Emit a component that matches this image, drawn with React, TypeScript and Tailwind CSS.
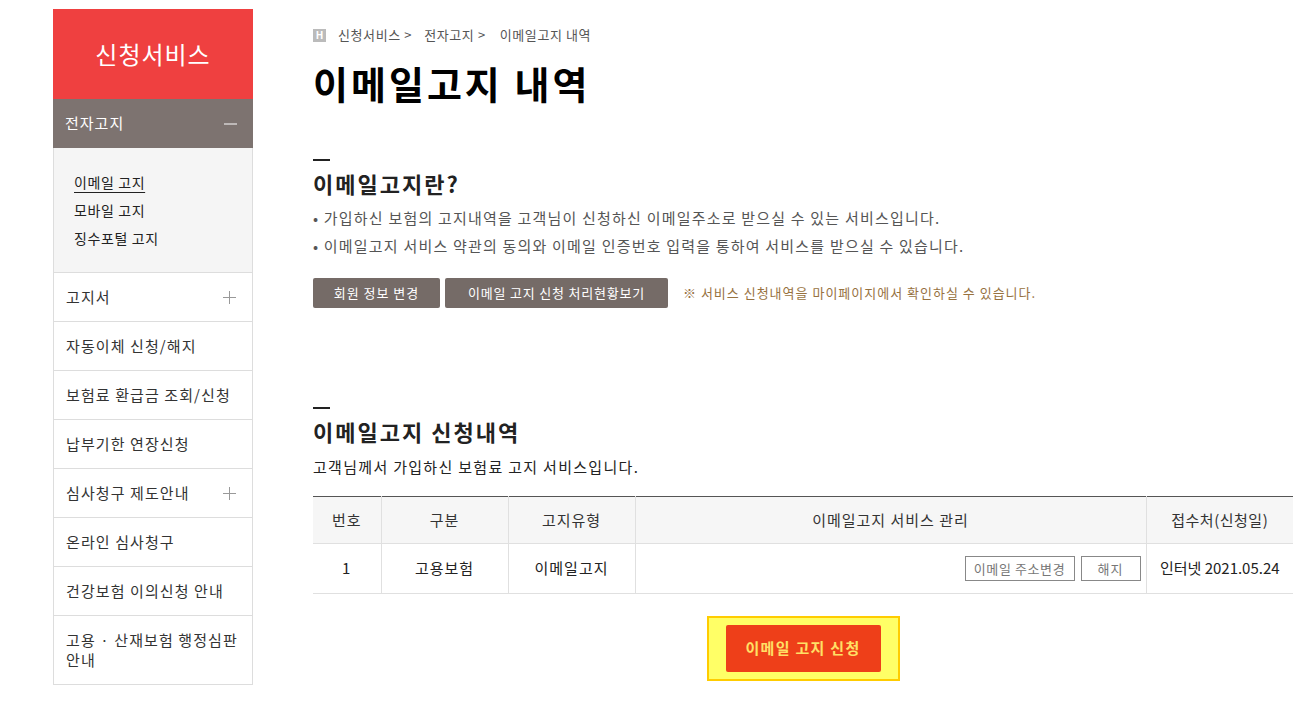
import { Fragment } from "react";

const font = { fontFamily: '"Noto Sans CJK KR", "Noto Sans", sans-serif' };

const menuItems: { label: string; plus?: boolean; lines?: string[] }[] = [
  { label: "고지서", plus: true },
  { label: "자동이체 신청/해지" },
  { label: "보험료 환급금 조회/신청" },
  { label: "납부기한 연장신청" },
  { label: "심사청구 제도안내", plus: true },
  { label: "온라인 심사청구" },
  { label: "건강보험 이의신청 안내" },
  { label: "", lines: ["고용 · 산재보험 행정심판", "안내"] },
];

function PlusIcon() {
  return (
    <svg width="13" height="13" viewBox="0 0 13 13" className="shrink-0">
      <path d="M6.5 0v13M0 6.5h13" stroke="#999" strokeWidth="1" />
    </svg>
  );
}

function Sidebar() {
  return (
    <aside className="w-[200px] shrink-0">
      <div className="flex h-[90px] items-center justify-center bg-[#ef4040] text-[24px] leading-none tracking-[1px] text-white">
        신청서비스
      </div>
      <div className="flex h-[49px] items-center justify-between bg-[#7d7370] pl-3 pr-4 text-[15px] tracking-[1px] text-white">
        <span>전자고지</span>
        <svg width="13" height="2" viewBox="0 0 13 2">
          <path d="M0 1h13" stroke="#fff" strokeWidth="1" />
        </svg>
      </div>
      <div className="border-x border-[#dddddd] bg-[#f5f5f5] px-5 py-5 text-[14px] leading-[28px] tracking-[0.6px] text-[#222]">
        <div className="underline underline-offset-[4px]">이메일 고지</div>
        <div>모바일 고지</div>
        <div>징수포털 고지</div>
      </div>
      <div className="border-x border-b border-[#dddddd]">
        {menuItems.map((item, i) => (
          <div
            key={i}
            className={
              "flex items-center justify-between border-t border-[#dddddd] pl-3 pr-4 text-[15px] tracking-[1.1px] text-[#333] " +
              (item.lines ? "h-[69px] leading-[20px]" : "h-[49px]")
            }
          >
            <span className="whitespace-nowrap">
              {item.lines
                ? item.lines.map((l, j) => (
                    <Fragment key={j}>
                      {l}
                      {j < item.lines!.length - 1 && <br />}
                    </Fragment>
                  ))
                : item.label}
            </span>
            {item.plus && <PlusIcon />}
          </div>
        ))}
      </div>
    </aside>
  );
}

function SectionTitle({ children, className = "" }: { children: React.ReactNode; className?: string }) {
  return (
    <div className={className}>
      <div className="h-[2px] w-[17px] bg-[#222]" />
      <h3 className="mt-[8px] text-[22px] font-bold leading-[28px] tracking-[2px] text-[#222]">{children}</h3>
    </div>
  );
}

export default function App() {
  return (
    <div style={font} className="min-h-[703px] bg-white">
      <div className="ml-[53px] flex w-[1240px] items-start gap-[60px] pt-[9px]">
        <Sidebar />
        <main className="w-[980px] pt-[19px]">
          <div className="flex h-[14px] items-center text-[13px] leading-[14px] tracking-[0.6px] text-[#555]">
            <span className="mr-[12px] flex h-[13px] w-[13px] items-center justify-center bg-[#bbbbbb] text-[10px] font-bold tracking-normal text-white">
              H
            </span>
            <span>신청서비스 &gt;</span>
            <span className="ml-[12px]">전자고지 &gt;</span>
            <span className="ml-[14px]">이메일고지 내역</span>
          </div>
          <h2 className="mt-[18px] text-[38px] font-bold leading-[46px] tracking-[3px] text-black">이메일고지 내역</h2>

          <SectionTitle className="mt-[53px]">이메일고지란?</SectionTitle>
          <ul className="mt-[7px] text-[15px] leading-[28px] tracking-[1.2px] text-[#555]">
            <li>• 가입하신 보험의 고지내역을 고객님이 신청하신 이메일주소로 받으실 수 있는 서비스입니다.</li>
            <li>• 이메일고지 서비스 약관의 동의와 이메일 인증번호 입력을 통하여 서비스를 받으실 수 있습니다.</li>
          </ul>
          <div className="mt-[18px] flex items-center">
            <button className="h-[30px] w-[127px] rounded-[2px] bg-[#756b67] text-[13px] tracking-[1px] text-white">
              회원 정보 변경
            </button>
            <button className="ml-[5px] h-[30px] w-[223px] rounded-[2px] bg-[#756b67] text-[13px] tracking-[0.8px] text-white">
              이메일 고지 신청 처리현황보기
            </button>
            <span className="ml-[15px] text-[13px] tracking-[1px] text-[#97723f]">
              ※ 서비스 신청내역을 마이페이지에서 확인하실 수 있습니다.
            </span>
          </div>

          <SectionTitle className="mt-[99px]">이메일고지 신청내역</SectionTitle>
          <p className="mt-[11px] text-[15px] leading-[22px] tracking-[1.3px] text-[#222]">
            고객님께서 가입하신 보험료 고지 서비스입니다.
          </p>

          <table className="mt-[18px] w-[980px] table-fixed border-collapse border-t border-[#555] text-[15px] tracking-[1px]">
            <colgroup>
              <col className="w-[68px]" />
              <col className="w-[127px]" />
              <col className="w-[127px]" />
              <col className="w-[511px]" />
              <col className="w-[147px]" />
            </colgroup>
            <thead>
              <tr className="h-[47px] bg-[#f6f6f6] text-[#333]">
                <th className="border-r border-b border-[#e0e0e0] font-normal">번호</th>
                <th className="border-r border-b border-[#e0e0e0] font-normal">구분</th>
                <th className="border-r border-b border-[#e0e0e0] font-normal">고지유형</th>
                <th className="border-r border-b border-[#e0e0e0] font-normal">이메일고지 서비스 관리</th>
                <th className="border-b border-[#e0e0e0] font-normal tracking-[0.5px]">접수처(신청일)</th>
              </tr>
            </thead>
            <tbody>
              <tr className="h-[50px] text-[#222]">
                <td className="border-r border-b border-[#e0e0e0] text-center">1</td>
                <td className="border-r border-b border-[#e0e0e0] text-center">고용보험</td>
                <td className="border-r border-b border-[#e0e0e0] text-center">이메일고지</td>
                <td className="border-r border-b border-[#e0e0e0] pr-[5px]">
                  <div className="flex justify-end gap-[6px]">
                    <button className="h-[25px] w-[110px] border border-[#888] text-[13px] tracking-[0.6px] text-[#777]">
                      이메일 주소변경
                    </button>
                    <button className="h-[25px] w-[60px] border border-[#888] text-[13px] text-[#777]">해지</button>
                  </div>
                </td>
                <td className="border-b border-[#e0e0e0] text-center tracking-normal">인터넷 2021.05.24</td>
              </tr>
            </tbody>
          </table>

          <div className="mt-[22px] flex justify-center">
            <div className="flex h-[65px] w-[193px] items-center justify-center border-2 border-[#ffcc00] bg-[#ffff66]">
              <button className="h-[47px] w-[155px] rounded-[2px] bg-[#ee3f19] text-[15px] font-bold tracking-[1.3px] text-[#ffe066]">
                이메일 고지 신청
              </button>
            </div>
          </div>
        </main>
      </div>
    </div>
  );
}
